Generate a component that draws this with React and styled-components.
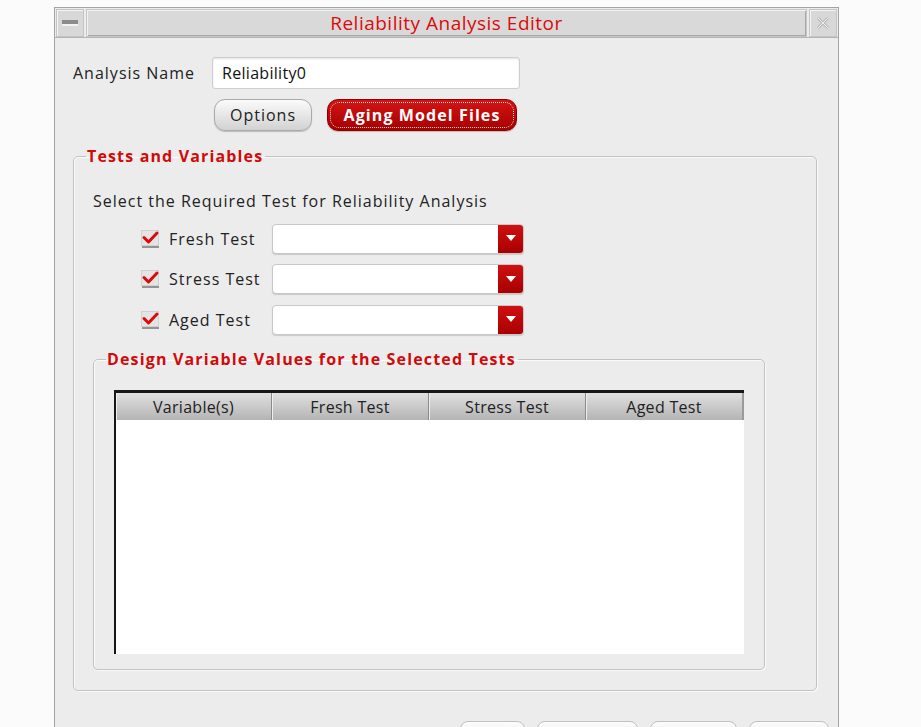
import React from 'react';
import styled, { createGlobalStyle } from 'styled-components';

const GlobalStyle = createGlobalStyle`
  *, *::before, *::after {
    box-sizing: border-box;
  }
  html, body {
    margin: 0;
    padding: 0;
    background: #fbfbfb;
    overflow: hidden;
  }
  body {
    font-family: "Open Sans", "DejaVu Sans", sans-serif;
    font-size: 16px;
    letter-spacing: 1px;
    color: #222;
  }
`;

const Window = styled.div`
  margin: 7px 0 0 54px;
  width: 785px;
  height: 740px;
  border: 1px solid #a4a4a4;
  background: #ececec;
  display: flex;
  flex-direction: column;
`;

const TitleBar = styled.div`
  display: flex;
  align-items: stretch;
  height: 30px;
  padding: 1px 1px 0 1px;
  gap: 2px;
  border-bottom: 1px solid #b4b4b4;
`;

const TitleButton = styled.div`
  width: 28px;
  display: flex;
  align-items: center;
  justify-content: center;
  background: #d8d8d8;
  border: 1px solid #c4c4c4;
  box-shadow: inset 1px 1px 0 #f4f4f4;
`;

const TitleCenter = styled.div`
  flex: 1;
  display: flex;
  align-items: center;
  justify-content: center;
  background: #d9d9d9;
  border: 1px solid #c6c6c6;
  box-shadow: inset 1px 1px 0 #f2f2f2, inset -1px -1px 0 #a8a8a8;
  color: #dd0a0a;
  font-size: 19px;
  letter-spacing: 0.5px;
`;

const Body = styled.div`
  display: flex;
  flex-direction: column;
  padding: 19px 20px 0 18px;
`;

const NameRow = styled.div`
  display: flex;
  align-items: center;
`;

const Label = styled.span`
  width: 139px;
  color: #222;
`;

const TextInput = styled.div`
  width: 308px;
  height: 32px;
  padding-left: 9px;
  display: flex;
  align-items: center;
  background: #fff;
  border: 1px solid #cfcfcf;
  border-radius: 3px;
  box-shadow: inset 0 1px 2px rgba(0, 0, 0, 0.12);
  color: #111;
  letter-spacing: 0.3px;
`;

const ButtonRow = styled.div`
  display: flex;
  gap: 15px;
  margin: 10px 0 0 141px;
`;

const PillButton = styled.div`
  height: 32px;
  width: ${p => p.w}px;
  display: flex;
  align-items: center;
  justify-content: center;
  border-radius: 11px;
  border: 1px solid ${p => (p.primary ? '#8a0000' : '#a9a9a9')};
  background: ${p => (p.primary
    ? 'linear-gradient(#d41414, #a60000)'
    : 'linear-gradient(#fbfbfb, #d2d2d2)')};
  color: ${p => (p.primary ? '#fff' : '#222')};
  font-weight: ${p => (p.primary ? 700 : 400)};
  letter-spacing: ${p => (p.primary ? '1.1px' : '1px')};
  position: relative;
  box-shadow: 0 1px 1px rgba(0, 0, 0, 0.2);
`;

const FocusRing = styled.span`
  position: absolute;
  inset: 2px;
  border: 1px dotted #f6d0d0;
  border-radius: 9px;
`;

const Group = styled.fieldset`
  margin: ${p => p.m};
  padding: ${p => p.pad};
  border: 1px solid #c2c2c2;
  border-radius: 5px;
  box-shadow: 1px 1px 0 #fafafa, inset 1px 1px 0 #fafafa;
  width: ${p => p.w}px;
  min-width: 0;
  display: flex;
  flex-direction: column;
`;

const Legend = styled.legend`
  margin-left: 12px;
  padding: 0 2px 0 1px;
  color: #d10a0a;
  font-weight: 700;
  font-size: 16px;
  letter-spacing: 1.15px;
  line-height: 20px;
`;

const Intro = styled.div`
  margin: 24px 0 0 19px;
  line-height: 22px;
`;

const TestList = styled.div`
  display: flex;
  flex-direction: column;
  gap: 9.5px;
  margin: 11px 0 0 67px;
`;

const TestRow = styled.div`
  display: flex;
  align-items: center;
  height: 31px;
`;

const CheckLabel = styled.span`
  width: 103px;
  margin-left: 9px;
`;

const Combo = styled.div`
  width: 252px;
  height: 30px;
  display: flex;
  border: 1px solid #c8c8c8;
  border-radius: 4px;
  background: #fff;
  overflow: hidden;
  box-shadow: 0 1px 1px rgba(0, 0, 0, 0.15);
`;

const ComboField = styled.div`
  flex: 1;
`;

const ComboArrow = styled.div`
  width: 25px;
  display: flex;
  align-items: center;
  justify-content: center;
  background: linear-gradient(#cf1010, #a80000);
`;

const Table = styled.div`
  margin: 21px 0 0 20px;
  width: 630px;
  height: 264px;
  background: #fff;
  border-top: 3px solid #161616;
  border-left: 2px solid #161616;
  display: flex;
  flex-direction: column;
`;

const HeaderRow = styled.div`
  display: grid;
  grid-template-columns: 156px 157px 157px 156px;
  height: 27px;
  border-right: 2px solid #9a9a9a;
`;

const HeaderCell = styled.div`
  display: flex;
  align-items: center;
  justify-content: center;
  background: linear-gradient(#e0e0e0, #b4b4b4);
  border-right: 1px solid #8a8a8a;
  box-shadow: inset 1px 0 0 #efefef;
  color: #222;
  letter-spacing: 0.3px;
  &:last-child {
    border-right: none;
  }
`;

const Footer = styled.div`
  display: flex;
  justify-content: flex-end;
  gap: 12px;
  margin: 30px -11px 0 0;
`;

const FooterButton = styled.div`
  width: ${p => p.w}px;
  height: 30px;
  border: 1px solid #c0c0c0;
  border-radius: 8px;
  background: linear-gradient(#fdfdfd, #dadada);
`;

const Check = () => (
  <svg width="19" height="18" viewBox="0 0 19 18">
    <rect x="0.5" y="0.5" width="17" height="15" fill="#e4e4e4" stroke="#d0d0d0" />
    <line x1="1" y1="17" x2="18" y2="17" stroke="#777" strokeWidth="1.5" />
    <path d="M3 7.5 L7.5 12 L16 3" fill="none" stroke="#dd0a0a" strokeWidth="3" strokeLinecap="round" strokeLinejoin="round" />
  </svg>
);

const Arrow = () => (
  <svg width="10" height="7" viewBox="0 0 10 7">
    <path d="M0 0 H10 L5 6 Z" fill="#fff" />
  </svg>
);

const TESTS = ['Fresh Test', 'Stress Test', 'Aged Test'];
const COLUMNS = ['Variable(s)', 'Fresh Test', 'Stress Test', 'Aged Test'];
const FOOTER_WIDTHS = [65, 101, 87, 80];

export default function App() {
  return (
    <>
      <GlobalStyle />
      <Window>
        <TitleBar>
          <TitleButton>
            <svg width="16" height="6" viewBox="0 0 16 6">
              <rect x="0" y="0" width="16" height="5" fill="#8c8c8c" />
              <rect x="0" y="4" width="16" height="2" fill="#f2f2f2" />
            </svg>
          </TitleButton>
          <TitleCenter>Reliability Analysis Editor</TitleCenter>
          <TitleButton>
            <svg width="16" height="16" viewBox="0 0 16 16">
              <path d="M3 3 L13 13 M13 3 L3 13" stroke="#bcbcbc" strokeWidth="3" />
              <path d="M3 3 L13 13 M13 3 L3 13" stroke="#efefef" strokeWidth="1" />
            </svg>
          </TitleButton>
        </TitleBar>
        <Body>
          <NameRow>
            <Label>Analysis Name</Label>
            <TextInput>Reliability0</TextInput>
          </NameRow>
          <ButtonRow>
            <PillButton w={98}>Options</PillButton>
            <PillButton w={190} primary>
              <FocusRing />
              Aging Model Files
            </PillButton>
          </ButtonRow>
          <Group w={744} m="15px 0 0 0" pad="0 0 20px 0">
            <Legend>Tests and Variables</Legend>
            <Intro>Select the Required Test for Reliability Analysis</Intro>
            <TestList>
              {TESTS.map(t => (
                <TestRow key={t}>
                  <Check />
                  <CheckLabel>{t}</CheckLabel>
                  <Combo>
                    <ComboField />
                    <ComboArrow><Arrow /></ComboArrow>
                  </Combo>
                </TestRow>
              ))}
            </TestList>
            <Group w={672} m="14px 0 0 19px" pad="0 0 15px 0">
              <Legend>Design Variable Values for the Selected Tests</Legend>
              <Table>
                <HeaderRow>
                  {COLUMNS.map(c => <HeaderCell key={c}>{c}</HeaderCell>)}
                </HeaderRow>
              </Table>
            </Group>
          </Group>
          <Footer>
            {FOOTER_WIDTHS.map(w => <FooterButton key={w} w={w} />)}
          </Footer>
        </Body>
      </Window>
    </>
  );
}
